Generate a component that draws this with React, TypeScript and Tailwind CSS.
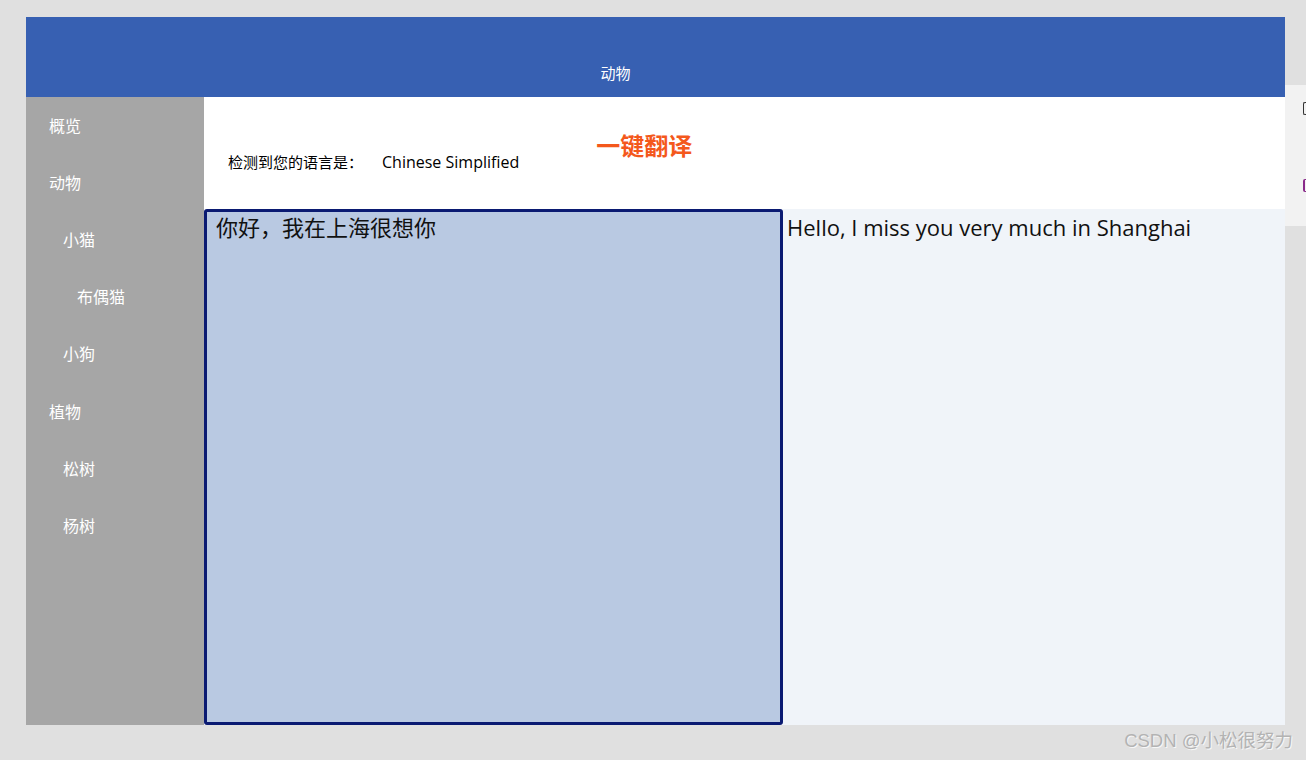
const menu = [
  { label: "概览", level: 0 },
  { label: "动物", level: 0 },
  { label: "小猫", level: 1 },
  { label: "布偶猫", level: 2 },
  { label: "小狗", level: 1 },
  { label: "植物", level: 0 },
  { label: "松树", level: 1 },
  { label: "杨树", level: 1 },
];

const indent = ["pl-[23px]", "pl-[37px]", "pl-[51px]"];

export default function App() {
  return (
    <div
      className="relative flex h-[760px] w-[1306px] overflow-hidden bg-[#e0e0e0]"
      style={{ fontFamily: '"Open Sans", "Noto Sans CJK SC", sans-serif' }}
    >
      <div className="ml-[26px] mt-[17px] flex h-[708px] w-[1259px] flex-col">
        <header className="flex h-[80px] items-end justify-center bg-[#3760b2] pb-[13px] pr-[80px] text-[15px] text-white">
          动物
        </header>
        <div className="flex flex-1">
          <nav className="w-[178px] bg-[#a6a6a6] text-[16px] text-white">
            {menu.map((m) => (
              <div key={m.label} className={`flex h-[57.2px] items-center ${indent[m.level]}`}>
                {m.label}
              </div>
            ))}
          </nav>
          <main className="flex flex-1 flex-col bg-white">
            <div className="flex h-[112px] items-start pl-[24px] text-black">
              <span className="mt-[54px] text-[15px]">检测到您的语言是：</span>
              <span className="ml-[19px] mt-[53px] text-[16px]">Chinese Simplified</span>
              <button className="ml-[77px] mt-[31px] text-[24px] font-bold text-[#f4581c]">一键翻译</button>
            </div>
            <div className="flex flex-1">
              <div className="w-[579px] rounded-[3px] border-[3px] border-[#0a1a72] bg-[#b9c9e2] px-[9px] text-[22px] leading-[30px] text-[#111]">
                你好，我在上海很想你
              </div>
              <div className="flex-1 bg-[#f0f4f9] px-[4px] pt-[2px] text-[22px] leading-[32px] text-[#111]">
                Hello, I miss you very much in Shanghai
              </div>
            </div>
          </main>
        </div>
      </div>
      <div className="mt-[85px] flex h-[141px] w-[21px] flex-col bg-[#f2f2f2]">
        <div className="ml-[18px] mt-[17px] h-[13px] w-[3px] rounded-l-[2px] border-y border-l border-[#333]" />
        <div className="ml-[18px] mt-[64px] h-[13px] w-[3px] rounded-l-[2px] border-y border-l-2 border-[#8a2a8a]" />
      </div>
      <div
        className="absolute bottom-[5px] right-[13px] text-[18.5px] text-[#b3b3b3]"
        style={{ fontFamily: '"Liberation Sans", "Noto Sans CJK SC", sans-serif', textShadow: "1px 1px 0 #f7f7f7" }}
      >
        CSDN @小松很努力
      </div>
    </div>
  );
}
